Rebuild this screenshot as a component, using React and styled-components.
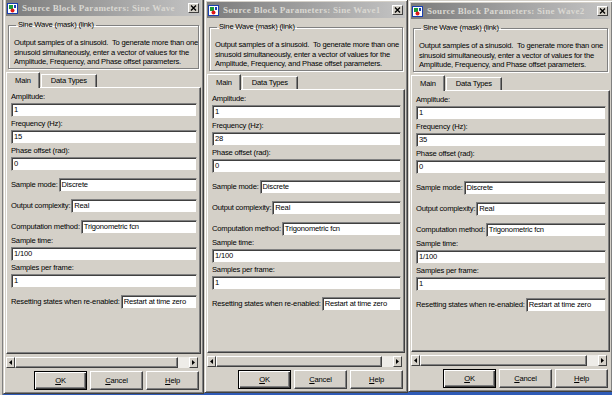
import React from 'react';
import styled, { createGlobalStyle } from 'styled-components';

const GlobalStyle = createGlobalStyle`
  html, body {
    margin: 0;
    padding: 0;
  }
  body {
    background: #2f5bb7;
    font-family: "Liberation Sans", Arial, sans-serif;
  }
`;

const Screen = styled.div`
  width: 612px;
  height: 395px;
  overflow: hidden;
  display: flex;
  align-items: flex-start;
  background: #2f5bb7;
`;

const Edge = styled.div`
  width: 3px;
  height: 395px;
  flex-shrink: 0;
  background: #d4d0c8;
  border-right: 1px solid #808080;
  box-sizing: border-box;
`;

const Window = styled.div`
  box-sizing: border-box;
  flex-shrink: 0;
  width: ${p => p.$width}px;
  height: ${p => p.$height}px;
  margin-top: ${p => p.$top}px;
  display: flex;
  flex-direction: column;
  background: #d4d0c8;
  border: 1px solid;
  border-color: #d4d0c8 #404040 #404040 #d4d0c8;
  box-shadow: inset 1px 1px #fff, inset -1px -1px #808080;
  padding: 2px;
  overflow: hidden;
  font-size: 7.6px;
  letter-spacing: -0.2px;
  color: #000;
`;

const TitleBar = styled.div`
  height: 16px;
  flex-shrink: 0;
  display: flex;
  align-items: center;
  gap: 4px;
  padding: 0 2px 0 1px;
  background: linear-gradient(to right, #7c7c7c, #c4c4c4);
`;

const TitleText = styled.span`
  flex: 1;
  white-space: nowrap;
  overflow: hidden;
  font: bold 9px "Liberation Serif", serif;
  letter-spacing: 0.3px;
  color: #dad8d2;
`;

const CloseBox = styled.div`
  box-sizing: border-box;
  width: 11px;
  height: 10px;
  flex-shrink: 0;
  display: flex;
  align-items: center;
  justify-content: center;
  background: #d4d0c8;
  border: 1px solid;
  border-color: #fff #404040 #404040 #fff;
`;

const Group = styled.fieldset`
  margin: 4px 2px 0 2px;
  padding: 8px 5px 1px 5px;
  min-width: 0;
  border: 1px solid #808080;
  box-shadow: inset 1px 1px #fff, 1px 1px #fff;
  overflow: hidden;
`;

const Legend = styled.legend`
  padding: 0 2px;
  margin-left: 2px;
  line-height: 10px;
  white-space: nowrap;
`;

const Line = styled.div`
  line-height: 9.6px;
  white-space: nowrap;
`;

const TabStrip = styled.div`
  display: flex;
  align-items: flex-end;
  height: 15px;
  margin-top: 3px;
  flex-shrink: 0;
  position: relative;
  z-index: 1;
`;

const Tab = styled.div`
  box-sizing: border-box;
  height: ${p => (p.$active ? 16 : 13)}px;
  padding: 0 ${p => (p.$active ? 8 : 9)}px;
  margin-right: 1px;
  margin-bottom: ${p => (p.$active ? -1 : 0)}px;
  display: flex;
  align-items: center;
  background: #d4d0c8;
  border: 1px solid;
  border-bottom: none;
  border-color: #fff #404040 transparent #fff;
  box-shadow: inset -1px 0 #808080;
  white-space: nowrap;
`;

const Panel = styled.div`
  flex: 1;
  min-height: 0;
  display: flex;
  flex-direction: column;
  padding: 3px 3px 0 4px;
  border: 1px solid;
  border-color: #fff #404040 #404040 #fff;
  box-shadow: inset -1px -1px #808080;
`;

const Field = styled.div`
  display: flex;
  flex-direction: column;
  margin-bottom: 1px;
`;

const Label = styled.span`
  line-height: 12px;
  height: 12px;
  white-space: nowrap;
`;

const Row = styled.div`
  display: flex;
  align-items: center;
  padding: 6px 0 1px 0;
`;

const Input = styled.div`
  box-sizing: border-box;
  flex: 1;
  height: 14px;
  line-height: 12px;
  padding: 0 2px;
  background: #fff;
  border: 1px solid;
  border-color: #808080 #d4d0c8 #d4d0c8 #808080;
  box-shadow: inset 1px 1px #404040;
  white-space: nowrap;
  overflow: hidden;
  margin-left: ${p => (p.$inline ? 1 : 0)}px;
`;

const ScrollBar = styled.div`
  display: flex;
  height: 11px;
  flex-shrink: 0;
  margin: 3px 3px 0 0;
  background: #eeece8;
`;

const Arrow = styled.div`
  box-sizing: border-box;
  width: 9px;
  display: flex;
  align-items: center;
  justify-content: center;
  background: #d4d0c8;
  border: 1px solid;
  border-color: #fff #404040 #404040 #fff;
`;

const Thumb = styled.div`
  box-sizing: border-box;
  flex: 0 0 85%;
  background: #d4d0c8;
  border: 1px solid;
  border-color: #fff #404040 #404040 #fff;
  box-shadow: inset -1px -1px #808080;
`;

const Track = styled.div`
  flex: 1;
`;

const ButtonRow = styled.div`
  display: flex;
  justify-content: flex-end;
  gap: 3px;
  margin: 3px 2px 1px 0;
  flex-shrink: 0;
`;

const Button = styled.button`
  box-sizing: border-box;
  width: 53px;
  height: 19px;
  padding: 0;
  font: inherit;
  letter-spacing: inherit;
  color: #000;
  background: #d4d0c8;
  border: 1px solid;
  border-color: ${p => (p.$default ? '#000' : '#fff #404040 #404040 #fff')};
  box-shadow: ${p =>
    p.$default
      ? 'inset 1px 1px #fff, inset -1px -1px #404040, inset -2px -2px #808080'
      : 'inset -1px -1px #808080'};
`;

const BlockIcon = () => (
  <svg width="11" height="11" viewBox="0 0 11 11">
    <rect x="0.5" y="0.5" width="10" height="10" fill="#fff" stroke="#1a3fb0" />
    <rect x="2" y="2" width="4" height="4" fill="#1a9a3a" />
    <circle cx="5.5" cy="7.5" r="2" fill="#e01818" />
    <rect x="7" y="2" width="2" height="3" fill="#1a3fb0" />
  </svg>
);

const CloseIcon = () => (
  <svg width="7" height="6" viewBox="0 0 7 6">
    <path d="M1 0.5 L6 5.5 M6 0.5 L1 5.5" stroke="#000" strokeWidth="1.4" />
  </svg>
);

const ArrowIcon = ({ dir }) => (
  <svg width="3" height="5" viewBox="0 0 3 5">
    <polygon points={dir === 'left' ? '3,0 0,2.5 3,5' : '0,0 3,2.5 0,5'} fill="#000" />
  </svg>
);

const windows = [
  { title: 'Source Block Parameters: Sine Wave', freq: '15', width: 201, height: 397, top: -3 },
  { title: 'Source Block Parameters: Sine Wave1', freq: '28', width: 204, height: 394, top: -1 },
  { title: 'Source Block Parameters: Sine Wave2', freq: '35', width: 205, height: 392, top: 0 },
];

const Dialog = ({ title, freq, width, height, top }) => (
  <Window $width={width} $height={height} $top={top}>
    <TitleBar>
      <BlockIcon />
      <TitleText>{title}</TitleText>
      <CloseBox>
        <CloseIcon />
      </CloseBox>
    </TitleBar>

    <Group>
      <Legend>Sine Wave (mask) (link)</Legend>
      <Line>Output samples of a sinusoid.&nbsp; To generate more than one</Line>
      <Line>sinusoid simultaneously, enter a vector of values for the</Line>
      <Line>Amplitude, Frequency, and Phase offset parameters.</Line>
    </Group>

    <TabStrip>
      <Tab $active>Main</Tab>
      <Tab>Data Types</Tab>
    </TabStrip>

    <Panel>
      <Field>
        <Label>Amplitude:</Label>
        <Input>1</Input>
      </Field>
      <Field>
        <Label>Frequency (Hz):</Label>
        <Input>{freq}</Input>
      </Field>
      <Field>
        <Label>Phase offset (rad):</Label>
        <Input>0</Input>
      </Field>
      <Row>
        <Label>Sample mode:</Label>
        <Input $inline>Discrete</Input>
      </Row>
      <Row>
        <Label>Output complexity:</Label>
        <Input $inline>Real</Input>
      </Row>
      <Row>
        <Label>Computation method:</Label>
        <Input $inline>Trigonometric fcn</Input>
      </Row>
      <Field>
        <Label>Sample time:</Label>
        <Input>1/100</Input>
      </Field>
      <Field>
        <Label>Samples per frame:</Label>
        <Input>1</Input>
      </Field>
      <Row>
        <Label>Resetting states when re-enabled:</Label>
        <Input $inline>Restart at time zero</Input>
      </Row>
    </Panel>

    <ScrollBar>
      <Arrow>
        <ArrowIcon dir="left" />
      </Arrow>
      <Thumb />
      <Track />
      <Arrow>
        <ArrowIcon dir="right" />
      </Arrow>
    </ScrollBar>

    <ButtonRow>
      <Button $default>
        <u>O</u>K
      </Button>
      <Button>
        <u>C</u>ancel
      </Button>
      <Button>
        <u>H</u>elp
      </Button>
    </ButtonRow>
  </Window>
);

export default function App() {
  return (
    <>
      <GlobalStyle />
      <Screen>
        <Edge />
        {windows.map(w => (
          <Dialog key={w.title} {...w} />
        ))}
      </Screen>
    </>
  );
}
